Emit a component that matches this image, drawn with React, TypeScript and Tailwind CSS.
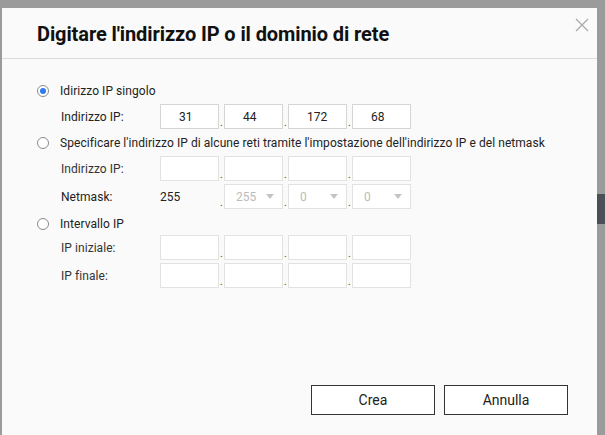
import React from "react";

const Radio = ({ checked }: { checked?: boolean }) => (
    <span className="w-[12px] h-[12px] rounded-full border border-[#8a8a8a] bg-white flex items-center justify-center shrink-0">
        {checked && <span className="w-[6px] h-[6px] rounded-full bg-[#2f7bf0]" />}
    </span>
);

const Dot = () => <span className="w-[5px] self-end text-[10px] leading-[10px] text-[#333] pb-[1px] pl-[1px]">.</span>;

const Box = ({ value, disabled }: { value?: string; disabled?: boolean }) => (
    <div
        className={
            "w-[59px] h-[25px] border bg-white flex items-center pl-[18px] text-[12px] " +
            (disabled ? "border-[#e2e2e2] text-[#bbb]" : "border-[#d4d4d4] text-[#222]")
        }
    >
        {value}
    </div>
);

const SelectBox = ({ value }: { value: string }) => (
    <div className="w-[59px] h-[25px] border border-[#e2e2e2] bg-white flex items-center justify-between pl-[11px] pr-[8px] text-[12px] text-[#bbb]">
        <span>{value}</span>
        <svg width="8" height="5" viewBox="0 0 8 5">
            <path d="M0 0H8L4 5Z" fill="#c4c4c4" />
        </svg>
    </div>
);

const IpRow = ({ label, values, disabled }: { label: string; values?: string[]; disabled?: boolean }) => (
    <div className="flex items-center h-[25px]">
        <span className={"w-[100px] pl-[1px] " + (disabled ? "text-[#333]" : "text-[#222]")}>{label}</span>
        <div className="flex">
            {[0, 1, 2, 3].map((i) => (
                <React.Fragment key={i}>
                    {i > 0 && <Dot />}
                    <Box value={values ? values[i] : ""} disabled={disabled} />
                </React.Fragment>
            ))}
        </div>
    </div>
);

export default function App() {
    return (
        <div
            className="w-[605px] h-[435px] bg-[#9b9b9b] pt-[8px] pl-[2px] overflow-hidden relative"
            style={{ fontFamily: "Roboto, 'Liberation Sans', sans-serif" }}
        >
            <div className="absolute right-0 top-[194px] w-[8px] h-[30px] bg-[#4b5058]" />
            <div className="w-[595px] h-[427px] bg-[#fafafa] flex flex-col relative">
                <div className="h-[51px] border-b border-[#dcdcdc] flex items-center pl-[35px] pt-[1px]">
                    <h1 className="text-[20px] font-bold text-[#111] tracking-[-0.1px]">
                        Digitare l'indirizzo IP o il dominio di rete
                    </h1>
                </div>
                <button className="absolute right-[7px] top-[9px] w-[16px] h-[16px] flex items-center justify-center">
                    <svg width="14" height="14" viewBox="0 0 14 14">
                        <path d="M1 1L13 13M13 1L1 13" stroke="#a8a8a8" strokeWidth="1.2" />
                    </svg>
                </button>

                <div className="pl-[35px] pt-[20px] text-[12px] tracking-[0.06px] text-[#222] flex flex-col">
                    <div className="flex items-center gap-[11px] h-[24px]">
                        <Radio checked />
                        <span>Idirizzo IP singolo</span>
                    </div>
                    <div className="pl-[23px] mt-[1px]">
                        <IpRow label="Indirizzo IP:" values={["31", "44", "172", "68"]} />
                    </div>

                    <div className="flex items-center gap-[11px] h-[24px] mt-[2px]">
                        <Radio />
                        <span>Specificare l'indirizzo IP di alcune reti tramite l'impostazione dell'indirizzo IP e del netmask</span>
                    </div>
                    <div className="pl-[23px] flex flex-col gap-[3px] mt-[1px]">
                        <IpRow label="Indirizzo IP:" disabled />
                        <div className="flex items-center h-[25px]">
                            <span className="w-[100px] pl-[1px]">Netmask:</span>
                            <span className="w-[59px]">255</span>
                            <Dot />
                            <SelectBox value="255" />
                            <Dot />
                            <SelectBox value="0" />
                            <Dot />
                            <SelectBox value="0" />
                        </div>
                    </div>

                    <div className="flex items-center gap-[11px] h-[24px] mt-[3px]">
                        <Radio />
                        <span>Intervallo IP</span>
                    </div>
                    <div className="pl-[23px] flex flex-col gap-[3px] -mt-[1px]">
                        <IpRow label="IP iniziale:" disabled />
                        <IpRow label="IP finale:" disabled />
                    </div>
                </div>

                <div className="mt-auto mb-[20px] flex justify-end gap-[9px] pr-[29px]">
                    <button className="w-[124px] h-[30px] border border-[#333] bg-white text-[14px] text-[#222]">Crea</button>
                    <button className="w-[124px] h-[30px] border border-[#333] bg-white text-[14px] text-[#222]">Annulla</button>
                </div>
            </div>
        </div>
    );
}
